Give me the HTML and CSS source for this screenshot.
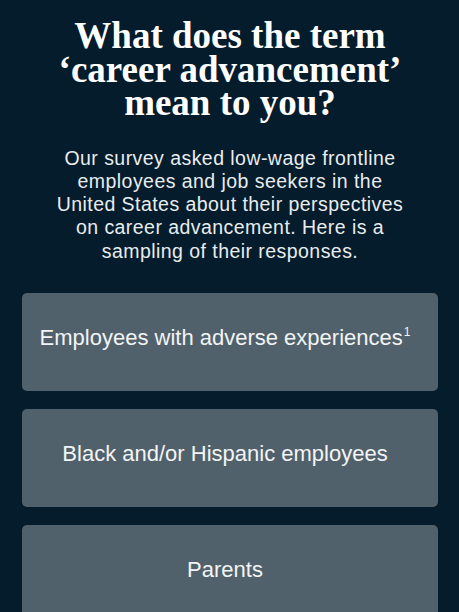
FILE: index.html
```html
<!DOCTYPE html>
<html lang="en">
<head>
<meta charset="utf-8">
<title>Career advancement</title>
<link rel="stylesheet" href="styles.css">
</head>
<body>
<main class="page">
  <h1 class="title">What does the term ‘career advancement’ mean to you?</h1>
  <p class="intro">Our survey asked low-wage frontline employees and job seekers in the United States about their perspectives on career advancement. Here is a sampling of their responses.</p>
  <div class="cards">
    <button class="card">Employees with adverse experiences<sup>1</sup></button>
    <button class="card">Black and/or Hispanic employees</button>
    <button class="card">Parents</button>
  </div>
</main>
</body>
</html>
```
FILE: styles.css
```css
html, body {
  margin: 0;
  padding: 0;
  background: #051c2c;
}
.page {
  padding: 19px 21px 0 22px;
  display: flex;
  flex-direction: column;
}
.title {
  margin: 0 auto;
  max-width: 360px;
  font-family: "Liberation Serif", "Times New Roman", serif;
  font-weight: 700;
  font-size: 37px;
  line-height: 33.5px;
  color: #ffffff;
  text-align: center;
}
.intro {
  margin: 27px auto 0;
  max-width: 358px;
  font-family: "Liberation Sans", Arial, sans-serif;
  font-size: 19.5px;
  letter-spacing: 0.45px;
  line-height: 23.3px;
  color: #e9ecee;
  text-align: center;
}
.cards {
  margin-top: 30px;
  display: flex;
  flex-direction: column;
  gap: 18px;
}
.card {
  height: 98px;
  border: none;
  border-radius: 5px;
  background: #51616b;
  color: #f2f4f5;
  font-family: "Liberation Sans", Arial, sans-serif;
  font-size: 22px;
  text-align: center;
  padding: 0 10px 8px 0;
}
.card sup {
  font-size: 12px;
  vertical-align: 9px;
  line-height: 0;
  margin-left: 1px;
}
```
